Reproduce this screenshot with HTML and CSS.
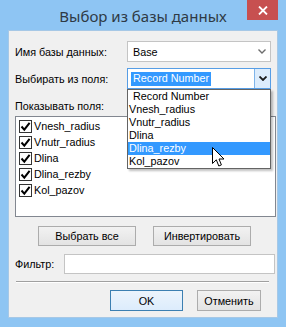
FILE: index.html
```html
<!DOCTYPE html>
<html lang="ru">
<head>
    <meta charset="UTF-8">
    <title>Выбор из базы данных</title>
    <link rel="stylesheet" href="styles.css">
</head>
<body>
    <div class="window">
        <div class="titlebar">
            <span class="title">Выбор из базы данных</span>
            <button class="close-button">
                <svg width="10" height="9" viewBox="0 0 10 9"><path d="M1 0.5 L9 8.5 M9 0.5 L1 8.5" stroke="#fff" stroke-width="1.8"/></svg>
            </button>
        </div>
        <div class="client">
            <div class="form-row">
                <span class="label form-label">Имя базы данных:</span>
                <div class="combo">
                    <span class="combo-text">Base</span>
                    <span class="combo-arrow">
                        <svg width="8" height="5" viewBox="0 0 8 5"><path d="M0.5 0.5 L4 4 L7.5 0.5" fill="none" stroke="#6d6d6d" stroke-width="1.4"/></svg>
                    </span>
                </div>
            </div>
            <div class="form-row form-row-next">
                <span class="label form-label">Выбирать из поля:</span>
                <div class="combo combo-open">
                    <span class="combo-text"><span class="combo-selection">Record Number</span></span>
                    <span class="combo-arrow">
                        <svg width="8" height="5" viewBox="0 0 8 5"><path d="M0.5 0.5 L4 4 L7.5 0.5" fill="none" stroke="#1a1a1a" stroke-width="1.8"/></svg>
                    </span>
                    <ul class="dropdown">
                        <li class="dropdown-item first">Record Number</li>
                        <li class="dropdown-item">Vnesh_radius</li>
                        <li class="dropdown-item">Vnutr_radius</li>
                        <li class="dropdown-item">Dlina</li>
                        <li class="dropdown-item hover">Dlina_rezby</li>
                        <li class="dropdown-item">Kol_pazov</li>
                    </ul>
                </div>
            </div>

            <div class="label section-label">Показывать поля:</div>
            <ul class="checklist">
                <li class="check-item"><span class="checkbox"><svg width="11" height="11" viewBox="0 0 11 11"><path d="M1.5 5.5 L4.3 8.6 L9.6 1.8" fill="none" stroke="#000" stroke-width="2"/></svg></span>Vnesh_radius</li>
                <li class="check-item"><span class="checkbox"><svg width="11" height="11" viewBox="0 0 11 11"><path d="M1.5 5.5 L4.3 8.6 L9.6 1.8" fill="none" stroke="#000" stroke-width="2"/></svg></span>Vnutr_radius</li>
                <li class="check-item"><span class="checkbox"><svg width="11" height="11" viewBox="0 0 11 11"><path d="M1.5 5.5 L4.3 8.6 L9.6 1.8" fill="none" stroke="#000" stroke-width="2"/></svg></span>Dlina</li>
                <li class="check-item"><span class="checkbox"><svg width="11" height="11" viewBox="0 0 11 11"><path d="M1.5 5.5 L4.3 8.6 L9.6 1.8" fill="none" stroke="#000" stroke-width="2"/></svg></span>Dlina_rezby</li>
                <li class="check-item"><span class="checkbox"><svg width="11" height="11" viewBox="0 0 11 11"><path d="M1.5 5.5 L4.3 8.6 L9.6 1.8" fill="none" stroke="#000" stroke-width="2"/></svg></span>Kol_pazov</li>
            </ul>

            <div class="button-row">
                <button class="button wide">Выбрать все</button>
                <button class="button wide">Инвертировать</button>
            </div>

            <div class="filter-row">
                <span class="label filter-label">Фильтр:</span>
                <input type="text" class="filter-input">
            </div>

            <div class="separator"></div>

            <div class="dialog-buttons">
                <button class="button default ok">OK</button>
                <button class="button cancel">Отменить</button>
            </div>
        </div>

        <svg class="cursor" width="13" height="21" viewBox="0 0 13 21">
            <path d="M0.5 0.5 L0.5 16.5 L4.3 12.8 L6.8 19 L9.4 17.9 L7 12 L12 12 Z" fill="#fff" stroke="#000" stroke-width="1" stroke-linejoin="miter"/>
        </svg>
    </div>
</body>
</html>
```

FILE: styles.css
```css
* {
    margin: 0;
    padding: 0;
    box-sizing: border-box;
}

body {
    background: #8ec5f3;
    font-family: 'Liberation Sans', Arial, sans-serif;
    font-size: 10.8px;
    color: #000;
}

.window {
    position: relative;
    width: 286px;
    height: 327px;
    background: #8ec5f3;
    padding: 0 8px 9px 8px;
}

.titlebar {
    height: 30px;
    display: flex;
    align-items: center;
    justify-content: center;
}

.title {
    font-family: 'Noto Sans', 'Open Sans', sans-serif;
    font-size: 15px;
    color: #2e3a45;
    margin-top: 2px;
}

.close-button {
    position: absolute;
    top: 0;
    right: 8px;
    width: 31px;
    height: 20px;
    background: #c75050;
    border: none;
    display: flex;
    align-items: center;
    justify-content: center;
}

.client {
    height: 288px;
    background: #f0f0f0;
    border: 1px solid #a6c8e6;
    padding: 10px 2px 0 6px;
}

.form-row {
    display: flex;
    align-items: center;
    height: 21px;
}

.form-row-next {
    margin-top: 6px;
}

.form-label {
    width: 112px;
}

.combo {
    position: relative;
    width: 144px;
    height: 21px;
    background: #fff;
    border: 1px solid #c4c4c4;
    display: flex;
    align-items: center;
}

.combo-text {
    flex: 1;
    padding-left: 5px;
}

.combo-arrow {
    width: 16px;
    height: 100%;
    display: flex;
    align-items: center;
    justify-content: center;
}

.combo-open {
    border-color: #569de5;
}

.combo-open .combo-text {
    padding-left: 3px;
}

.combo-open .combo-arrow {
    background: #dcecfc;
    border-left: 1px solid #7eb4ea;
}

.combo-selection {
    display: inline-block;
    background: #3399ff;
    color: #fff;
    padding: 0 2px 1px 2px;
    line-height: 13px;
}

.dropdown {
    position: absolute;
    top: 20px;
    left: -1px;
    width: 144px;
    list-style: none;
    background: #fff;
    border: 1px solid #646464;
    box-shadow: 2px 2px 2px rgba(0, 0, 0, 0.25);
    z-index: 2;
}

.dropdown-item {
    height: 13px;
    line-height: 13px;
    padding-left: 1px;
}

.dropdown-item.first {
    padding-left: 5px;
}

.dropdown-item.hover {
    background: #3399ff;
    color: #fff;
}

.section-label {
    margin-top: 11px;
    height: 13px;
    line-height: 13px;
}

.checklist {
    list-style: none;
    margin-top: 3px;
    width: 261px;
    height: 101px;
    background: #fff;
    border: 1px solid #828790;
    padding-top: 1px;
}

.check-item {
    display: flex;
    align-items: center;
    height: 16px;
    padding-left: 3px;
}

.checkbox {
    width: 13px;
    height: 13px;
    border: 1px solid #333;
    background: #fff;
    margin-right: 2px;
    display: flex;
    align-items: center;
    justify-content: center;
}

.button-row {
    display: flex;
    gap: 17px;
    margin-top: 9px;
    padding-left: 23px;
}

.button {
    font-family: 'Liberation Sans', Arial, sans-serif;
    font-size: 10.8px;
    font-weight: normal;
    color: #000;
    height: 20px;
    background: linear-gradient(#f2f2f2, #e3e3e3);
    border: 1px solid #acacac;
}

.button.wide {
    width: 98px;
}

.filter-row {
    display: flex;
    align-items: center;
    margin-top: 8px;
}

.filter-label {
    width: 49px;
}

.filter-input {
    width: 211px;
    height: 20px;
    border: 1px solid #c4c4c4;
    background: #fff;
}

.separator {
    margin: 7px 0 0 1px;
    width: 253px;
    border-top: 1px solid #a0a0a0;
    border-bottom: 1px solid #fff;
}

.dialog-buttons {
    display: flex;
    gap: 14px;
    margin-top: 7px;
    padding-left: 95px;
}

.button.ok {
    width: 73px;
    height: 21px;
}

.button.cancel {
    width: 64px;
    height: 21px;
}

.button.default {
    border-color: #3c7fb1;
    background: linear-gradient(#ecf4fc, #dcecfc);
}

.cursor {
    position: absolute;
    left: 212px;
    top: 147px;
    z-index: 3;
}
```
